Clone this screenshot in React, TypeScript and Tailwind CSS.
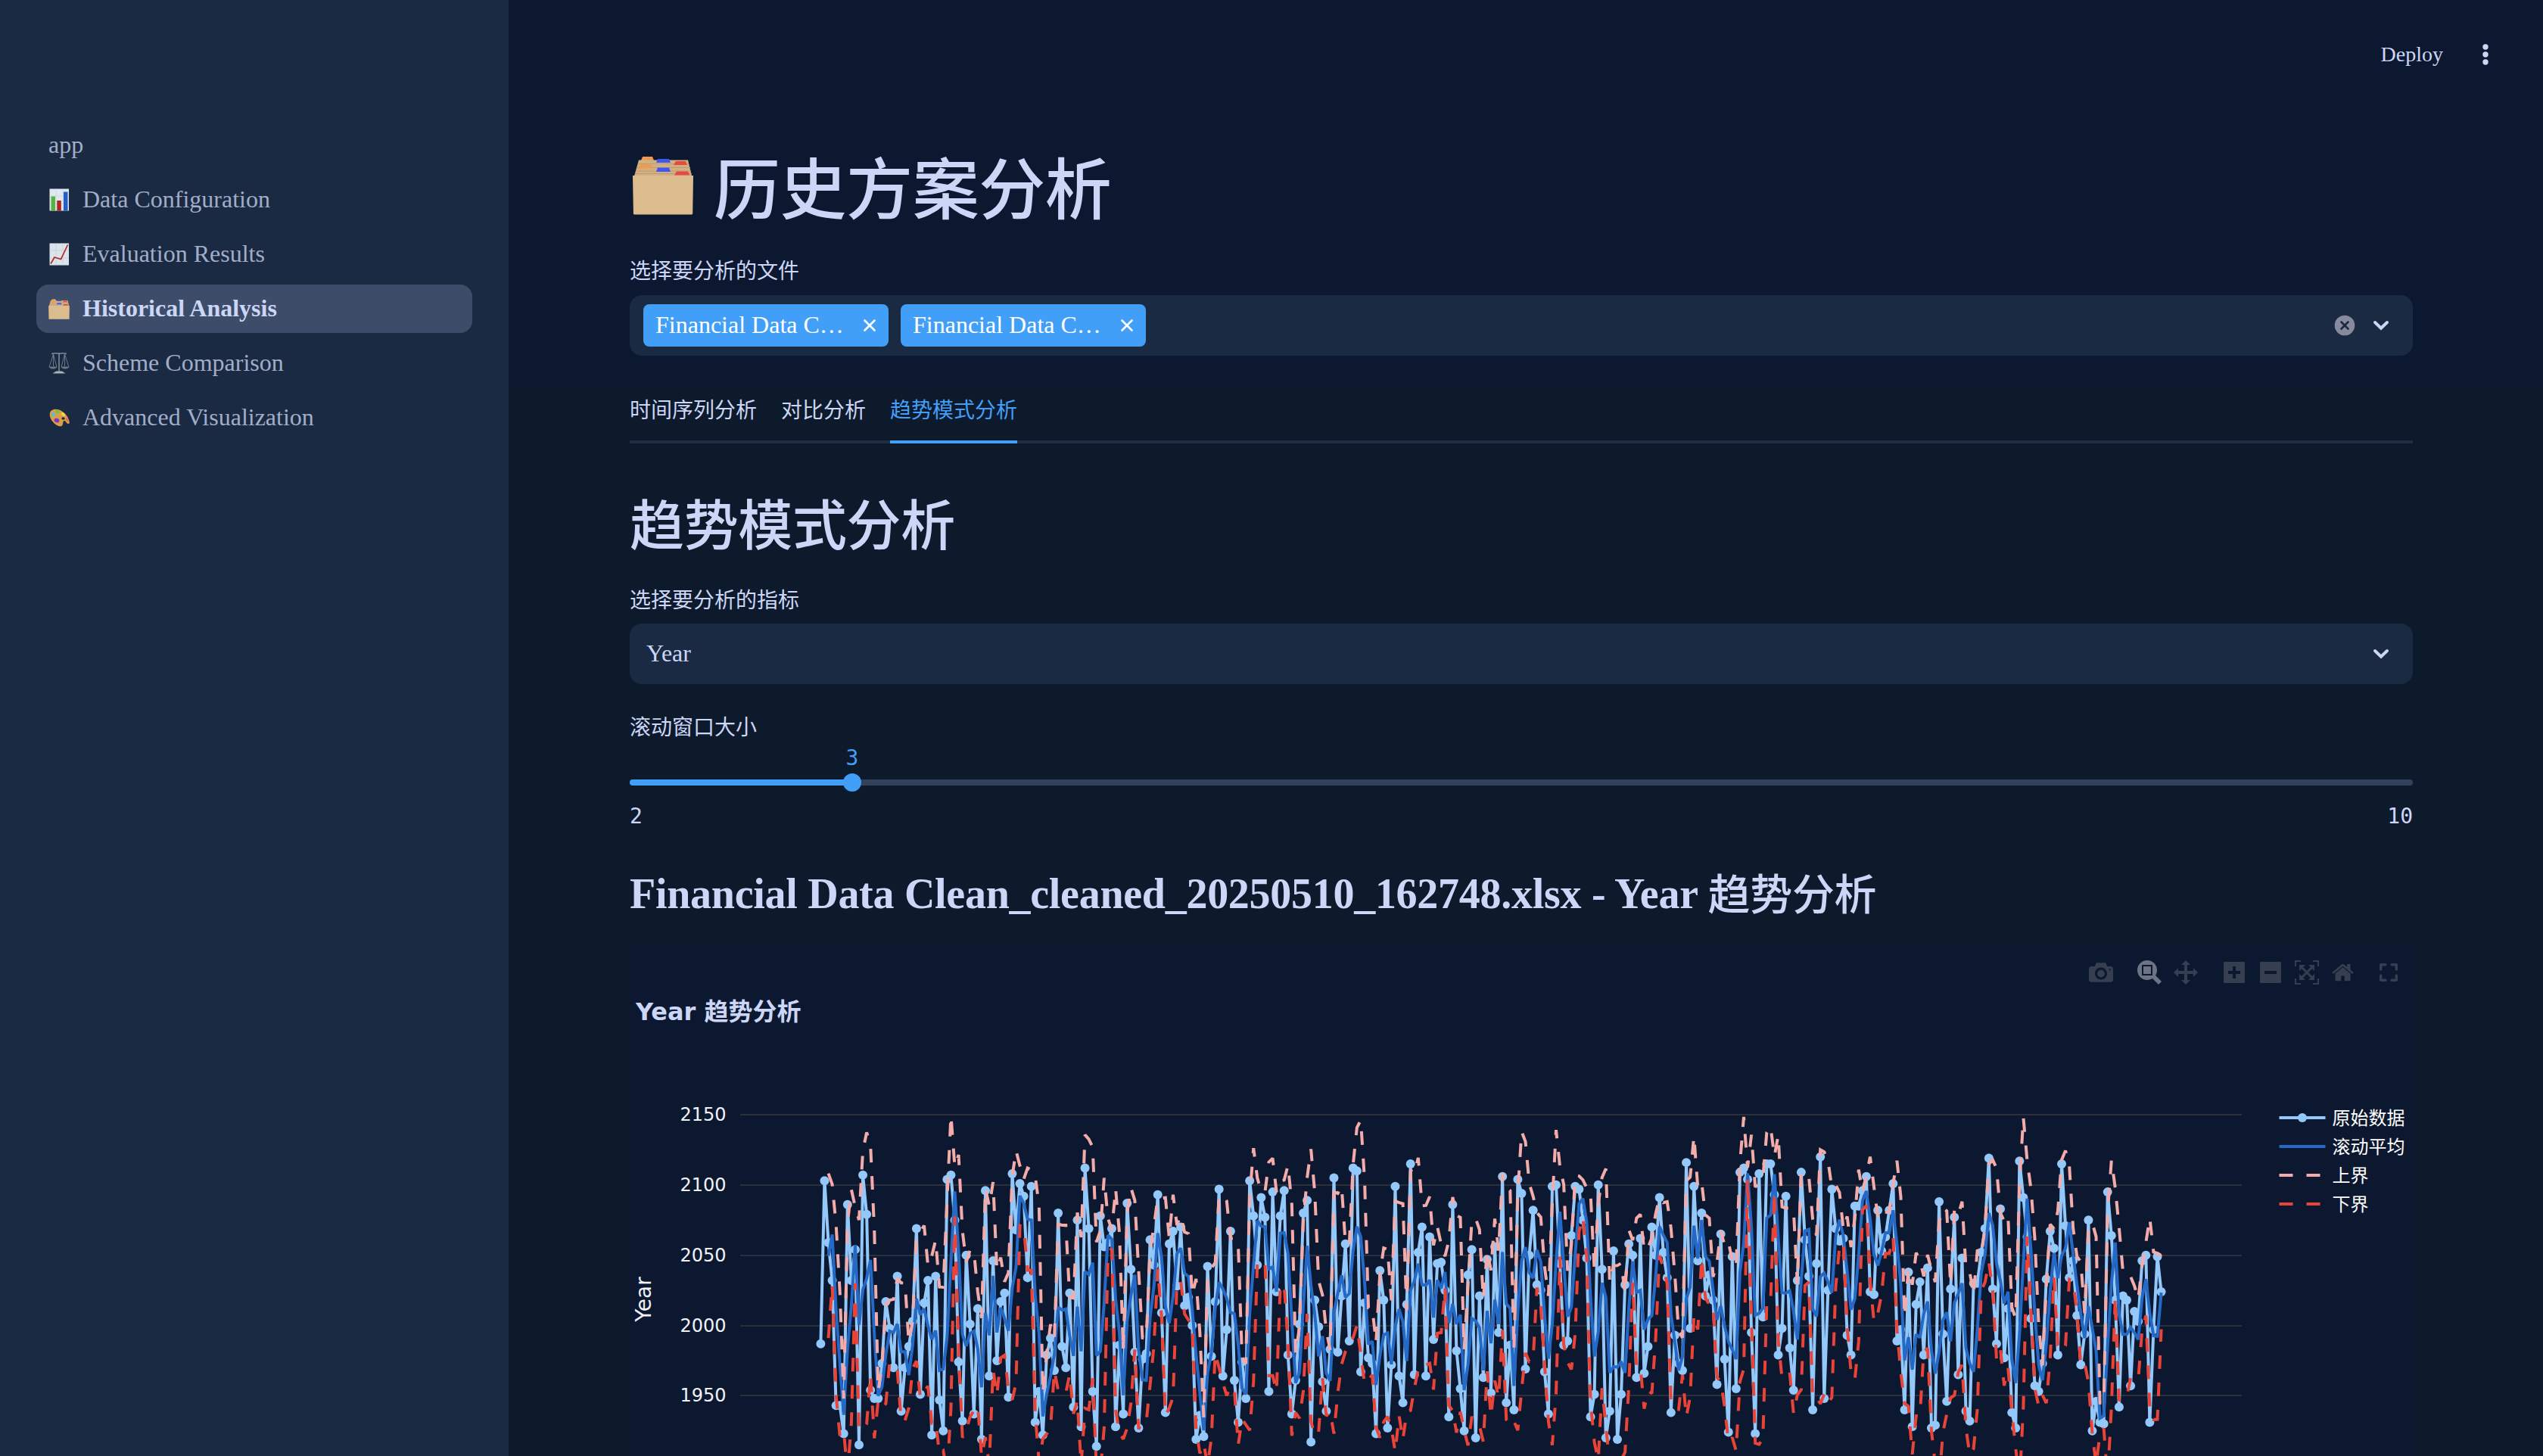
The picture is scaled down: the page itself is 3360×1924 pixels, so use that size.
import React from "react";

const INK = "#ccd6f6";

/* Vertical sample positions of the raw series, in thirds of a pixel below the plot origin. */
const SAMPLES = [
  1009, 363, 608, 757, 1253, 1253, 1363, 457, 754, 634, 1406, 341, 494, 1190, 1225, 1225, 1085, 838, 943, 1102,
  741, 1272, 1102, 1018, 916, 548, 1205, 846, 759, 1371, 741, 1232, 1350, 358, 336, 517, 1082, 1314, 656, 930,
  1286, 867, 1384, 402, 1133, 681, 1074, 840, 808, 1216, 335, 555, 370, 420, 747, 384, 1318, 1196, 1367, 1050,
  982, 1114, 488, 1018, 1103, 808, 1260, 518, 1334, 311, 552, 1195, 1411, 502, 625, 604, 552, 1335, 1015, 1288,
  449, 712, 1041, 1341, 1070, 1047, 593, 696, 416, 882, 1279, 612, 559, 780, 547, 858, 825, 933, 1384, 1290,
  1377, 698, 1059, 841, 393, 1133, 951, 563, 1151, 1320, 1080, 1226, 362, 498, 695, 428, 504, 1198, 404, 801,
  499, 401, 1050, 1284, 1152, 927, 488, 440, 1399, 832, 939, 1159, 1274, 1027, 348, 1039, 820, 612, 993, 309,
  321, 1119, 843, 1063, 1085, 1361, 717, 836, 1343, 1088, 381, 1133, 1239, 853, 294, 1130, 646, 546, 1136, 583,
  989, 691, 684, 794, 1295, 457, 1036, 1187, 1351, 732, 635, 1378, 820, 1142, 671, 1200, 620, 962, 343, 1242,
  1010, 1269, 356, 411, 1107, 654, 477, 772, 795, 1119, 1287, 381, 378, 690, 1010, 998, 576, 381, 393, 515,
  668, 1297, 1209, 380, 709, 1380, 1277, 642, 1386, 1210, 772, 612, 658, 1140, 590, 1125, 1020, 546, 655, 430,
  643, 746, 1280, 972, 1085, 1112, 290, 943, 381, 676, 490, 820, 735, 832, 1166, 573, 1070, 1358, 659, 1187,
  327, 311, 356, 963, 1363, 334, 900, 292, 295, 419, 1049, 948, 422, 1024, 1190, 754, 326, 597, 739, 1271,
  688, 265, 1222, 797, 392, 548, 598, 588, 976, 1050, 463, 460, 398, 345, 800, 810, 475, 641, 585, 478,
  372, 995, 950, 1270, 722, 1335, 850, 763, 1053, 708, 1341, 1332, 447, 970, 1233, 787, 508, 1128, 666, 1274,
  1311, 770, 765, 645, 550, 270, 787, 1006, 473, 1065, 870, 1281, 1341, 285, 427, 585, 908, 1174, 1194, 1085,
  750, 564, 626, 1054, 293, 539, 745, 680, 897, 1090, 969, 515, 1354, 1238, 1320, 1323, 405, 577, 835, 1259,
  815, 836, 1175, 880, 920, 676, 656, 1320, 950, 664, 803,
];

const YEARS = SAMPLES.map((s) => Math.round(2150 - (s - 99) / 5.57));
const px = (i: number) => 252.4 + i * 5.0605;
const py = (year: number) => 225 + (2150 - year) * 1.8567;

const STATS = YEARS.map((_, i) => {
  if (i < 2) return null;
  const w = YEARS.slice(i - 2, i + 1);
  const mean = (w[0] + w[1] + w[2]) / 3;
  const sd = Math.sqrt(w.reduce((a, v) => a + (v - mean) ** 2, 0) / 2);
  return { i, mean, up: mean + sd, low: mean - sd };
}).filter((s): s is { i: number; mean: number; up: number; low: number } => s !== null);

const toPath = (pts: [number, number][]) =>
  "M" + pts.map(([i, v]) => `${px(i).toFixed(2)},${py(v).toFixed(2)}`).join("L");

const RAW = toPath(YEARS.map((v, i) => [i, v]));
const MEAN = toPath(STATS.map((s) => [s.i, s.mean]));
const UPPER = toPath(STATS.map((s) => [s.i, s.up]));
const LOWER = toPath(STATS.map((s) => [s.i, s.low]));

function FolderIcon({ className }: { className: string }) {
  return (
    <svg viewBox="0 0 80 78" className={className}>
      <path d="M11 6l2-5h13l2 5z" fill="#ee9b50" />
      <path d="M8 5.5h65l5 21H2z" fill="#d2b083" />
      <path d="M7 10.500h67M5 15.500h71M4 20h73M3 23.500h75" stroke="#bb9b70" strokeWidth="1" />
      <path d="M31 9l2-5h15l2 5z" fill="#3b58ef" />
      <path d="M54 12l3-5h13l2 5z" fill="#e54a41" />
      <path d="M7 16.500l3-5h14l3 5z" fill="#ee9b50" />
      <path d="M31 21l2-5.500h15l2 5.500z" fill="#3b58ef" />
      <path d="M55 25.500l3-5h15l2.500 5z" fill="#e54a41" />
      <path d="M0 26h80l-.8 50q-.1 1.500-1.500 1.500H2.400Q1 77.500.9 76z" fill="#dbbc8f" />
    </svg>
  );
}

function BarsIcon() {
  return (
    <svg viewBox="0 0 28 30" className="h-[30px] w-7">
      <rect x="1.500" y=".5" width="25.500" height="29" fill="#dfe7ef" />
      <path d="M1.500 10h25.500M1.500 20h25.500M10 .5v29M19 .5v29" stroke="#c9d4df" strokeWidth=".6" />
      <rect x="3.500" y="10.500" width="5.500" height="19" fill="#55b542" />
      <rect x="11.300" y="16" width="5.500" height="13.500" fill="#b3241c" />
      <rect x="20" y="4.500" width="5.500" height="25" fill="#2160c4" />
    </svg>
  );
}

function TrendIcon() {
  return (
    <svg viewBox="0 0 28 30" className="h-[30px] w-7">
      <rect x="1.500" y=".5" width="25.500" height="29" fill="#dbe3eb" />
      <path d="M1.500 10h25.500M1.500 20h25.500M10 .5v29M19 .5v29" stroke="#c3ced9" strokeWidth=".6" />
      <path d="M3 27.500l5-8.500 8.500 2.500L25.500 2.500" fill="none" stroke="#b9251f" strokeWidth="1.700" />
    </svg>
  );
}

function ScaleIcon() {
  return (
    <svg viewBox="0 0 28 30" className="h-[30px] w-7" fill="none" stroke="#7f8b97">
      <path d="M4 2.500q5-1.500 10 0 5-1.500 10 0" strokeWidth="1.400" />
      <path d="M14 1v25" strokeWidth="1.600" />
      <path d="M6.500 3L1 20M6.500 3L11 20M6.500 3v16M21.500 3L17 20M21.500 3L27 20M21.500 3v16" strokeWidth=".8" />
      <path d="M.5 19.500h11q-1.500 3-5.500 3t-5.500-3zM16.500 19.500h11q-1.500 3-5.500 3t-5.500-3z" fill="#6c7883" stroke="none" />
      <path d="M10 25.500h8l4.500 3H5.500z" fill="#a9b1b9" stroke="none" />
    </svg>
  );
}

function PaletteIcon() {
  return (
    <svg viewBox="0 0 28 24" className="h-6 w-7">
      <path
        d="M8 .8C15 0 22 5 25.500 11.500c2.500 5 3 8.500 1 8.500-3 0-3-3.500-5.500-4-2.500 0-1 4-3 6.500-3 2.500-9-1-12.500-5.500C1 12 -1 2.500 8 .8z"
        fill="#dba043"
      />
      <ellipse cx="19.500" cy="13" rx="2.200" ry="1.800" fill="#1a2a43" />
      <ellipse cx="12" cy="4" rx="2.800" ry="2" transform="rotate(35 12 4)" fill="#6fc53c" />
      <ellipse cx="6.500" cy="7.500" rx="3" ry="2.500" transform="rotate(35 6.500 7.500)" fill="#62b7e0" />
      <ellipse cx="19.500" cy="7.500" rx="3" ry="1.800" transform="rotate(45 19.500 7.500)" fill="#f3d350" />
      <ellipse cx="11" cy="15.500" rx="3.500" ry="2.700" transform="rotate(25 11 15.500)" fill="#7b38c8" />
      <ellipse cx="24.500" cy="14.500" rx="2.400" ry="1.500" transform="rotate(60 24.500 14.500)" fill="#ea6a58" />
    </svg>
  );
}

function NavItem({ icon, label, active }: { icon?: React.ReactNode; label: string; active?: boolean }) {
  return (
    <a
      className={
        active
          ? "flex h-16 items-center rounded-2xl bg-[#3d4d69] px-4 font-bold text-[#ccd6f6]"
          : "flex h-16 items-center rounded-2xl px-4 text-[#a2adc9]"
      }
    >
      {icon && <span className="mr-[17px] flex w-7 justify-center">{icon}</span>}
      <span className="pb-0.5">{label}</span>
    </a>
  );
}

function Chevron() {
  return (
    <svg viewBox="0 0 20 12" className="h-3 w-5 overflow-visible">
      <path d="M2 2l8 7.800L18 2" fill="none" stroke={INK} strokeWidth="4" strokeLinecap="round" />
    </svg>
  );
}

function Tag() {
  return (
    <span className="flex h-14 w-[324px] items-center justify-between rounded-lg bg-[#429ff8] pr-[17px] pl-4 text-white">
      <span className="pb-0.5">Financial Data C…</span>
      <svg viewBox="0 0 16 16" className="h-4 w-4">
        <path d="M1.500 1.500l13 13M14.500 1.500l-13 13" stroke="#fff" strokeWidth="2.600" strokeLinecap="round" />
      </svg>
    </span>
  );
}

const MODEBAR = {
  camera:
    "m500 450c-83 0-150-67-150-150 0-83 67-150 150-150 83 0 150 67 150 150 0 83-67 150-150 150z m400 150h-120c-16 0-34 13-39 29l-31 93c-6 15-23 28-40 28h-340c-16 0-34-13-39-28l-31-94c-6-15-23-28-40-28h-120c-55 0-100-45-100-100v-450c0-55 45-100 100-100h800c55 0 100 45 100 100v450c0 55-45 100-100 100z m-400-550c-138 0-250 112-250 250 0 138 112 250 250 250 138 0 250-112 250-250 0-138-112-250-250-250z m365 380c-19 0-35 16-35 35 0 19 16 35 35 35 19 0 35-16 35-35 0-19-16-35-35-35z",
  zoom: "m1000-25l-250 251c40 63 63 138 63 218 0 224-182 406-407 406-224 0-406-182-406-406s183-406 407-406c80 0 155 22 218 62l250-250 125 125z m-812 250l0 438 437 0 0-438-437 0z m62 375l313 0 0-312-313 0 0 312z",
  pan: "m1000 350l-187 188 0-125-250 0 0 250 125 0-188 187-187-187 125 0 0-250-250 0 0 125-188-188 186-187 0 125 252 0 0-250-125 0 187-188 188 188-125 0 0 250 250 0 0-126 187 188z",
  plus: "m1 787l0-875 875 0 0 875-875 0z m687-500l-187 0 0-187-125 0 0 187-188 0 0 125 188 0 0 187 125 0 0-187 187 0 0-125z",
  minus: "m0 788l0-876 876 0 0 876-876 0z m688-500l-500 0 0 125 500 0 0-125z",
  auto: "m250 850l-187 0-63 0 0-62 0-188 63 0 0 188 187 0 0 62z m688 0l-188 0 0-62 188 0 0-188 62 0 0 188 0 62-62 0z m-875-938l0 188-63 0 0-188 0-62 63 0 187 0 0 62-187 0z m875 188l0-188-188 0 0-62 188 0 62 0 0 62 0 188-62 0z m-125 188l-1 0-93-94-156 156 156 156 92-93 2 0 0 250-250 0 0-2 93-92-156-156-156 156 94 92 0 2-250 0 0-250 0 0 93 93 157-156-157-156-93 94 0 0 0-250 250 0 0 0-94 93 156 157 156-157-93-93 0 0 250 0 0 250z",
  home: "m786 296v-267q0-15-11-26t-25-10h-214v214h-143v-214h-214q-15 0-25 10t-11 26v267q0 1 0 2t0 2l321 264 321-264q1-1 1-4z m124 39l-34-41q-5-5-12-6h-2q-7 0-12 3l-386 322-386-322q-7-4-13-4-7 2-12 7l-35 41q-4 5-3 12t6 12l401 334q18 15 42 15t43-15l136-114v109q0 8 5 13t13 5h107q8 0 13-5t5-13v-227l122-102q5-5 6-12t-4-13z",
};

function ModeIcon({ d, width = 1000, className }: { d: string; width?: number; className: string }) {
  return (
    <svg viewBox={`0 0 ${width} 1000`} className={className}>
      <path d={d} transform="matrix(1 0 0 -1 0 850)" />
    </svg>
  );
}

function Modebar() {
  return (
    <div className="flex h-8 items-center fill-[#363f50] pr-5">
      <ModeIcon d={MODEBAR.camera} className="mr-8 h-8 w-8" />
      <ModeIcon d={MODEBAR.zoom} className="mr-4 h-8 w-8 fill-[#6d7484]" />
      <ModeIcon d={MODEBAR.pan} className="mr-[34px] h-8 w-8" />
      <ModeIcon d={MODEBAR.plus} width={875} className="mr-5 h-8 w-7" />
      <ModeIcon d={MODEBAR.minus} width={875} className="mr-[18px] h-8 w-7" />
      <ModeIcon d={MODEBAR.auto} className="mr-[17px] h-8 w-8" />
      <ModeIcon d={MODEBAR.home} width={928.6} className="mr-[34px] h-8 w-[29px]" />
      <svg viewBox="0 0 24 24" className="h-6 w-6" fill="none" stroke="#363f50" strokeWidth="3.400">
        <path d="M1.700 8V1.700H8M16 1.700h6.300V8M22.300 16v6.300H16M8 22.300H1.700V16" strokeLinejoin="round" strokeLinecap="round" />
      </svg>
    </div>
  );
}

const LEGEND = ["原始数据", "滚动平均", "上界", "下界"];

function TrendChart() {
  return (
    <svg
      viewBox="0 0 2356 676"
      className="absolute inset-0 h-[676px] w-[2356px] font-['DejaVu_Sans','Noto_Sans_CJK_SC',sans-serif]"
      fill="none"
    >
      {[2150, 2100, 2050, 2000, 1950].map((v) => (
        <g key={v}>
          <rect x="146" y={Math.round(py(v)) - 1} width="1984" height="2" fill="#2b303b" />
          <text x="127.500" y={py(v) + 8} textAnchor="end" fontSize="24" fill="#f0f2f8">
            {v}
          </text>
        </g>
      ))}
      <text transform="translate(28 469) rotate(-90)" textAnchor="middle" fontSize="28" fill="#f0f2f8">
        Year
      </text>
      <path d={RAW} stroke="#93c8fb" strokeWidth="4" strokeLinejoin="miter" strokeMiterlimit="2" />
      {YEARS.map((v, i) => (
        <circle key={i} cx={px(i)} cy={py(v)} r="6" fill="#93c8fb" />
      ))}
      <path d={MEAN} stroke="#2569c7" strokeWidth="4" strokeMiterlimit="2" />
      <path d={UPPER} stroke="#f4acab" strokeWidth="4" strokeDasharray="18 18" strokeMiterlimit="2" />
      <path d={LOWER} stroke="#ea4337" strokeWidth="4" strokeDasharray="18 18" strokeMiterlimit="2" />

      <path d="M2179.500 229h61" stroke="#93c8fb" strokeWidth="4" />
      <circle cx="2210" cy="229" r="6" fill="#93c8fb" />
      <path d="M2179.500 267h61" stroke="#2569c7" strokeWidth="4" />
      <path d="M2179.500 305h61" stroke="#f4acab" strokeWidth="4" strokeDasharray="18 18" />
      <path d="M2179.500 343h61" stroke="#ea4337" strokeWidth="4" strokeDasharray="18 18" />
      {LEGEND.map((name, i) => (
        <text key={name} x="2249.500" y={237.500 + i * 38} fontSize="24" fill="#fff">
          {name}
        </text>
      ))}
    </svg>
  );
}

export default function App() {
  return (
    <div className="flex h-[1924px] w-[3360px] overflow-hidden bg-[#0d1a2c] font-['Liberation_Serif','Noto_Sans_CJK_SC',serif] text-[32px] leading-none text-[#ccd6f6]">
      <aside className="w-[672px] shrink-0 bg-[#1a2a42] px-12 pt-40">
        <nav className="flex flex-col gap-2">
          <NavItem label="app" />
          <NavItem icon={<BarsIcon />} label="Data Configuration" />
          <NavItem icon={<TrendIcon />} label="Evaluation Results" />
          <NavItem icon={<FolderIcon className="h-[27px] w-7" />} label="Historical Analysis" active />
          <NavItem icon={<ScaleIcon />} label="Scheme Comparison" />
          <NavItem icon={<PaletteIcon />} label="Advanced Visualization" />
        </nav>
      </aside>

      <main className="flex w-[2688px] shrink-0 flex-col bg-linear-to-b from-[#0c182f] from-[510px] to-[#0d1a2c] to-[510px]">
        <header className="flex h-36 items-center justify-end pr-[72px] text-[28px]">
          <span>Deploy</span>
          <svg viewBox="0 0 8 28" className="ml-[52px] h-7 w-2" fill={INK}>
            <circle cx="4" cy="4" r="3.700" />
            <circle cx="4" cy="14" r="3.700" />
            <circle cx="4" cy="24" r="3.700" />
          </svg>
        </header>

        <div className="flex w-[2516px] flex-col pl-40">
          <h1 className="mt-[55px] flex h-[108px] items-center text-[88px] font-medium tracking-[-0.44px]">
            <FolderIcon className="mr-[27px] ml-1 h-[78px] w-20 -translate-y-2" />
            历史方案分析
          </h1>

          <label className="mt-[38px] flex h-7 items-center text-[28px]">选择要分析的文件</label>
          <div className="mt-[17px] flex h-20 items-center rounded-2xl bg-[#1a2a42] pr-8 pl-[18px]">
            <div className="flex flex-1 gap-4">
              <Tag />
              <Tag />
            </div>
            <svg viewBox="0 0 28 28" className="mr-6 h-7 w-7">
              <circle cx="14" cy="14" r="13.300" fill="#868a9c" />
              <path d="M9.500 9.500l9 9M18.500 9.500l-9 9" stroke="#1a2a42" strokeWidth="2.600" strokeLinecap="round" />
            </svg>
            <Chevron />
          </div>

          <div className="mt-[32px] flex h-[84px] gap-8 border-b-4 border-[#202c40] text-[28px]">
            <span className="flex h-20 items-center pt-0.5">时间序列分析</span>
            <span className="flex h-20 items-center pt-0.5">对比分析</span>
            <span className="flex h-[84px] items-center border-b-4 border-[#429ff8] pt-0.5 text-[#429ff8]">趋势模式分析</span>
          </div>

          <h2 className="mt-[66px] flex h-[88px] items-center text-[72px] font-medium tracking-[-0.36px]">趋势模式分析</h2>

          <label className="mt-[40px] flex h-7 items-center text-[28px]">选择要分析的指标</label>
          <div className="mt-[16px] flex h-20 items-center justify-between rounded-2xl bg-[#1a2a42] pr-8 pl-[22px]">
            <span className="pb-0.5">Year</span>
            <Chevron />
          </div>

          <label className="mt-[44px] flex h-7 items-center text-[28px]">滚动窗口大小</label>
          <div className="mt-3 font-['DejaVu_Sans_Mono',monospace] text-[28px]">
            <div className="flex h-7 w-[294px] justify-end text-[#429ff8]">
              <span className="flex w-0 justify-center">3</span>
            </div>
            <div className="mt-[14px] flex h-2 items-center rounded-full bg-[#33415a]">
              <span className="h-2 w-[288px] rounded-l-full bg-[#429ff8]" />
              <span className="h-6 w-6 -translate-x-1.5 rounded-full bg-[#429ff8]" />
            </div>
            <div className="mt-[27px] flex h-7 items-center justify-between">
              <span>2</span>
              <span>10</span>
            </div>
          </div>

          <h3 className="mt-[56px] flex h-16 items-center text-[56px] font-bold tracking-[-0.28px] whitespace-pre">
            Financial Data Clean_cleaned_20250510_162748.xlsx - Year <span className="pt-1 font-medium">趋势分析</span>
          </h3>

          <section className="relative mt-[35px] h-[676px] overflow-hidden bg-[#0c182f]">
            <TrendChart />
            <div className="mt-[21px] flex justify-end">
              <Modebar />
            </div>
            <h4 className="mt-[20px] ml-2 font-['DejaVu_Sans','Noto_Sans_CJK_SC',sans-serif] text-[32px] font-bold">
              Year 趋势分析
            </h4>
          </section>
        </div>
      </main>
    </div>
  );
}
